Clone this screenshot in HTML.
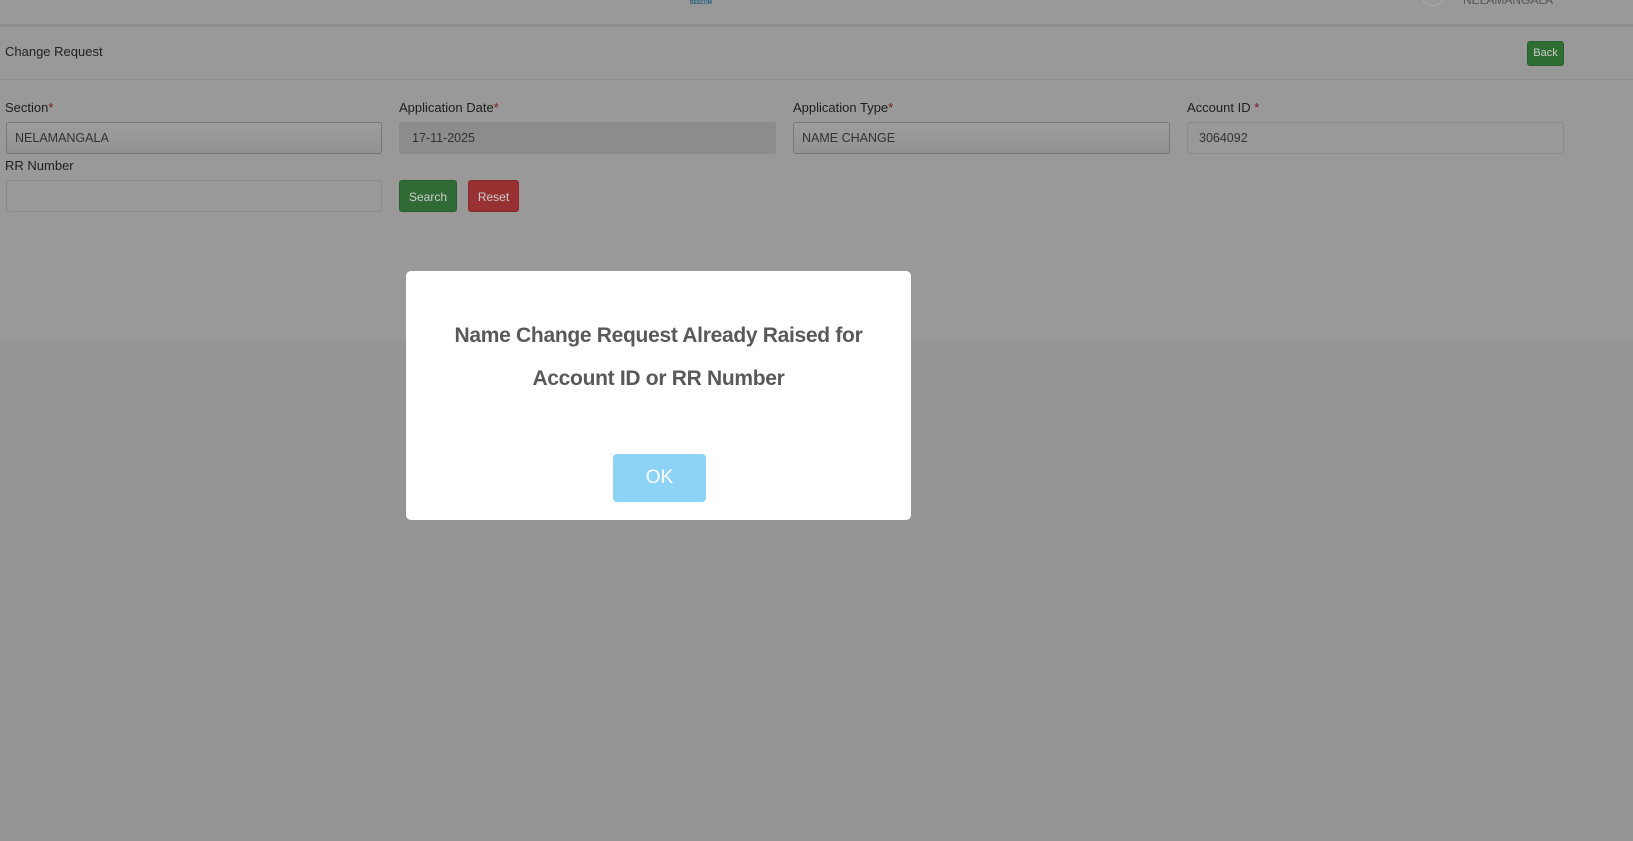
<!DOCTYPE html>
<html><head><style>
*{box-sizing:border-box;margin:0;padding:0}
body{width:1633px;height:841px;overflow:hidden;background:#959596;font-family:"Liberation Sans",sans-serif;position:relative}
.top{position:absolute;left:0;top:0;width:1633px;height:24px;background:#999}
.sep{position:absolute;left:0;top:24px;width:1633px;height:3px;background:#8e8e8e}
.card{position:absolute;left:0;top:27px;width:1633px;height:313px;background:#999}
.line{position:absolute;left:0;top:79px;width:1633px;height:1px;background:#8d8d8d}
.t{position:absolute;font-size:13px;color:#222}
.lbl{position:absolute;font-size:13px;color:#1e1e1e}
.lbl i{color:#7a1a1a;font-style:normal}
.in{position:absolute;height:32px;border:1px solid #8a8a8a;border-radius:3px;font-size:12.5px;color:#333;padding:8px 0 0 8px}
.btn{position:absolute;font-size:12px;color:#ccc;border-radius:3px;text-align:center}
.modal{position:absolute;left:406px;top:271px;width:505px;height:249px;background:#fff;border-radius:5px}
.msg{position:absolute;left:0;width:505px;text-align:center;font-size:21px;font-weight:bold;color:#595959;letter-spacing:-0.3px}
.ok{position:absolute;left:207px;top:183px;width:93px;height:48px;background:#8dd3f5;border-radius:4px;color:#fff;font-size:19px;text-align:center;line-height:48px}
</style></head><body>
<div class="top"></div>
<div style="position:absolute;left:690px;top:0;font-size:5px;color:#1f5f7f;font-weight:bold">BESCOM</div>
<div style="position:absolute;left:1463px;top:-7px;font-size:12px;color:#555">NELAMANGALA</div>
<div style="position:absolute;left:1420px;top:-20px;width:26px;height:26px;border:1px solid #aaa;border-radius:50%"></div>
<div class="sep"></div>
<div class="card"></div>
<div class="line"></div>
<div class="t" style="left:5px;top:44px">Change Request</div>
<div class="btn" style="left:1527px;top:41px;width:37px;height:25px;background:#2f6e33;border:1px solid #2a5e2d;line-height:23px;font-size:11px">Back</div>
<div class="lbl" style="left:5px;top:100px">Section<i>*</i></div>
<div class="lbl" style="left:399px;top:100px">Application Date<i>*</i></div>
<div class="lbl" style="left:793px;top:100px">Application Type<i>*</i></div>
<div class="lbl" style="left:1187px;top:100px">Account ID <i>*</i></div>
<div class="in" style="left:6px;top:122px;width:376px;background:linear-gradient(#9d9d9d,#929292);border-color:#777">NELAMANGALA</div>
<div class="in" style="left:399px;top:122px;width:377px;background:#8b8c8e;border-color:#8b8c8e;padding-left:12px">17-11-2025</div>
<div class="in" style="left:793px;top:122px;width:377px;background:linear-gradient(#9d9d9d,#929292);border-color:#777">NAME CHANGE</div>
<div class="in" style="left:1187px;top:122px;width:377px;background:#999;padding-left:11px">3064092</div>
<div class="lbl" style="left:5px;top:158px">RR Number</div>
<div class="in" style="left:6px;top:180px;width:376px;background:#999"></div>
<div class="btn" style="left:399px;top:180px;width:58px;height:32px;background:#306b35;border:1px solid #2a5e2d;line-height:32px">Search</div>
<div class="btn" style="left:468px;top:180px;width:51px;height:32px;background:#983232;border:1px solid #8a2c2c;line-height:32px">Reset</div>
<div class="modal">
<div class="msg" style="top:53px">Name Change Request Already Raised for</div>
<div class="msg" style="top:96px">Account ID or RR Number</div>
<div class="ok">OK</div>
</div>
</body></html>
